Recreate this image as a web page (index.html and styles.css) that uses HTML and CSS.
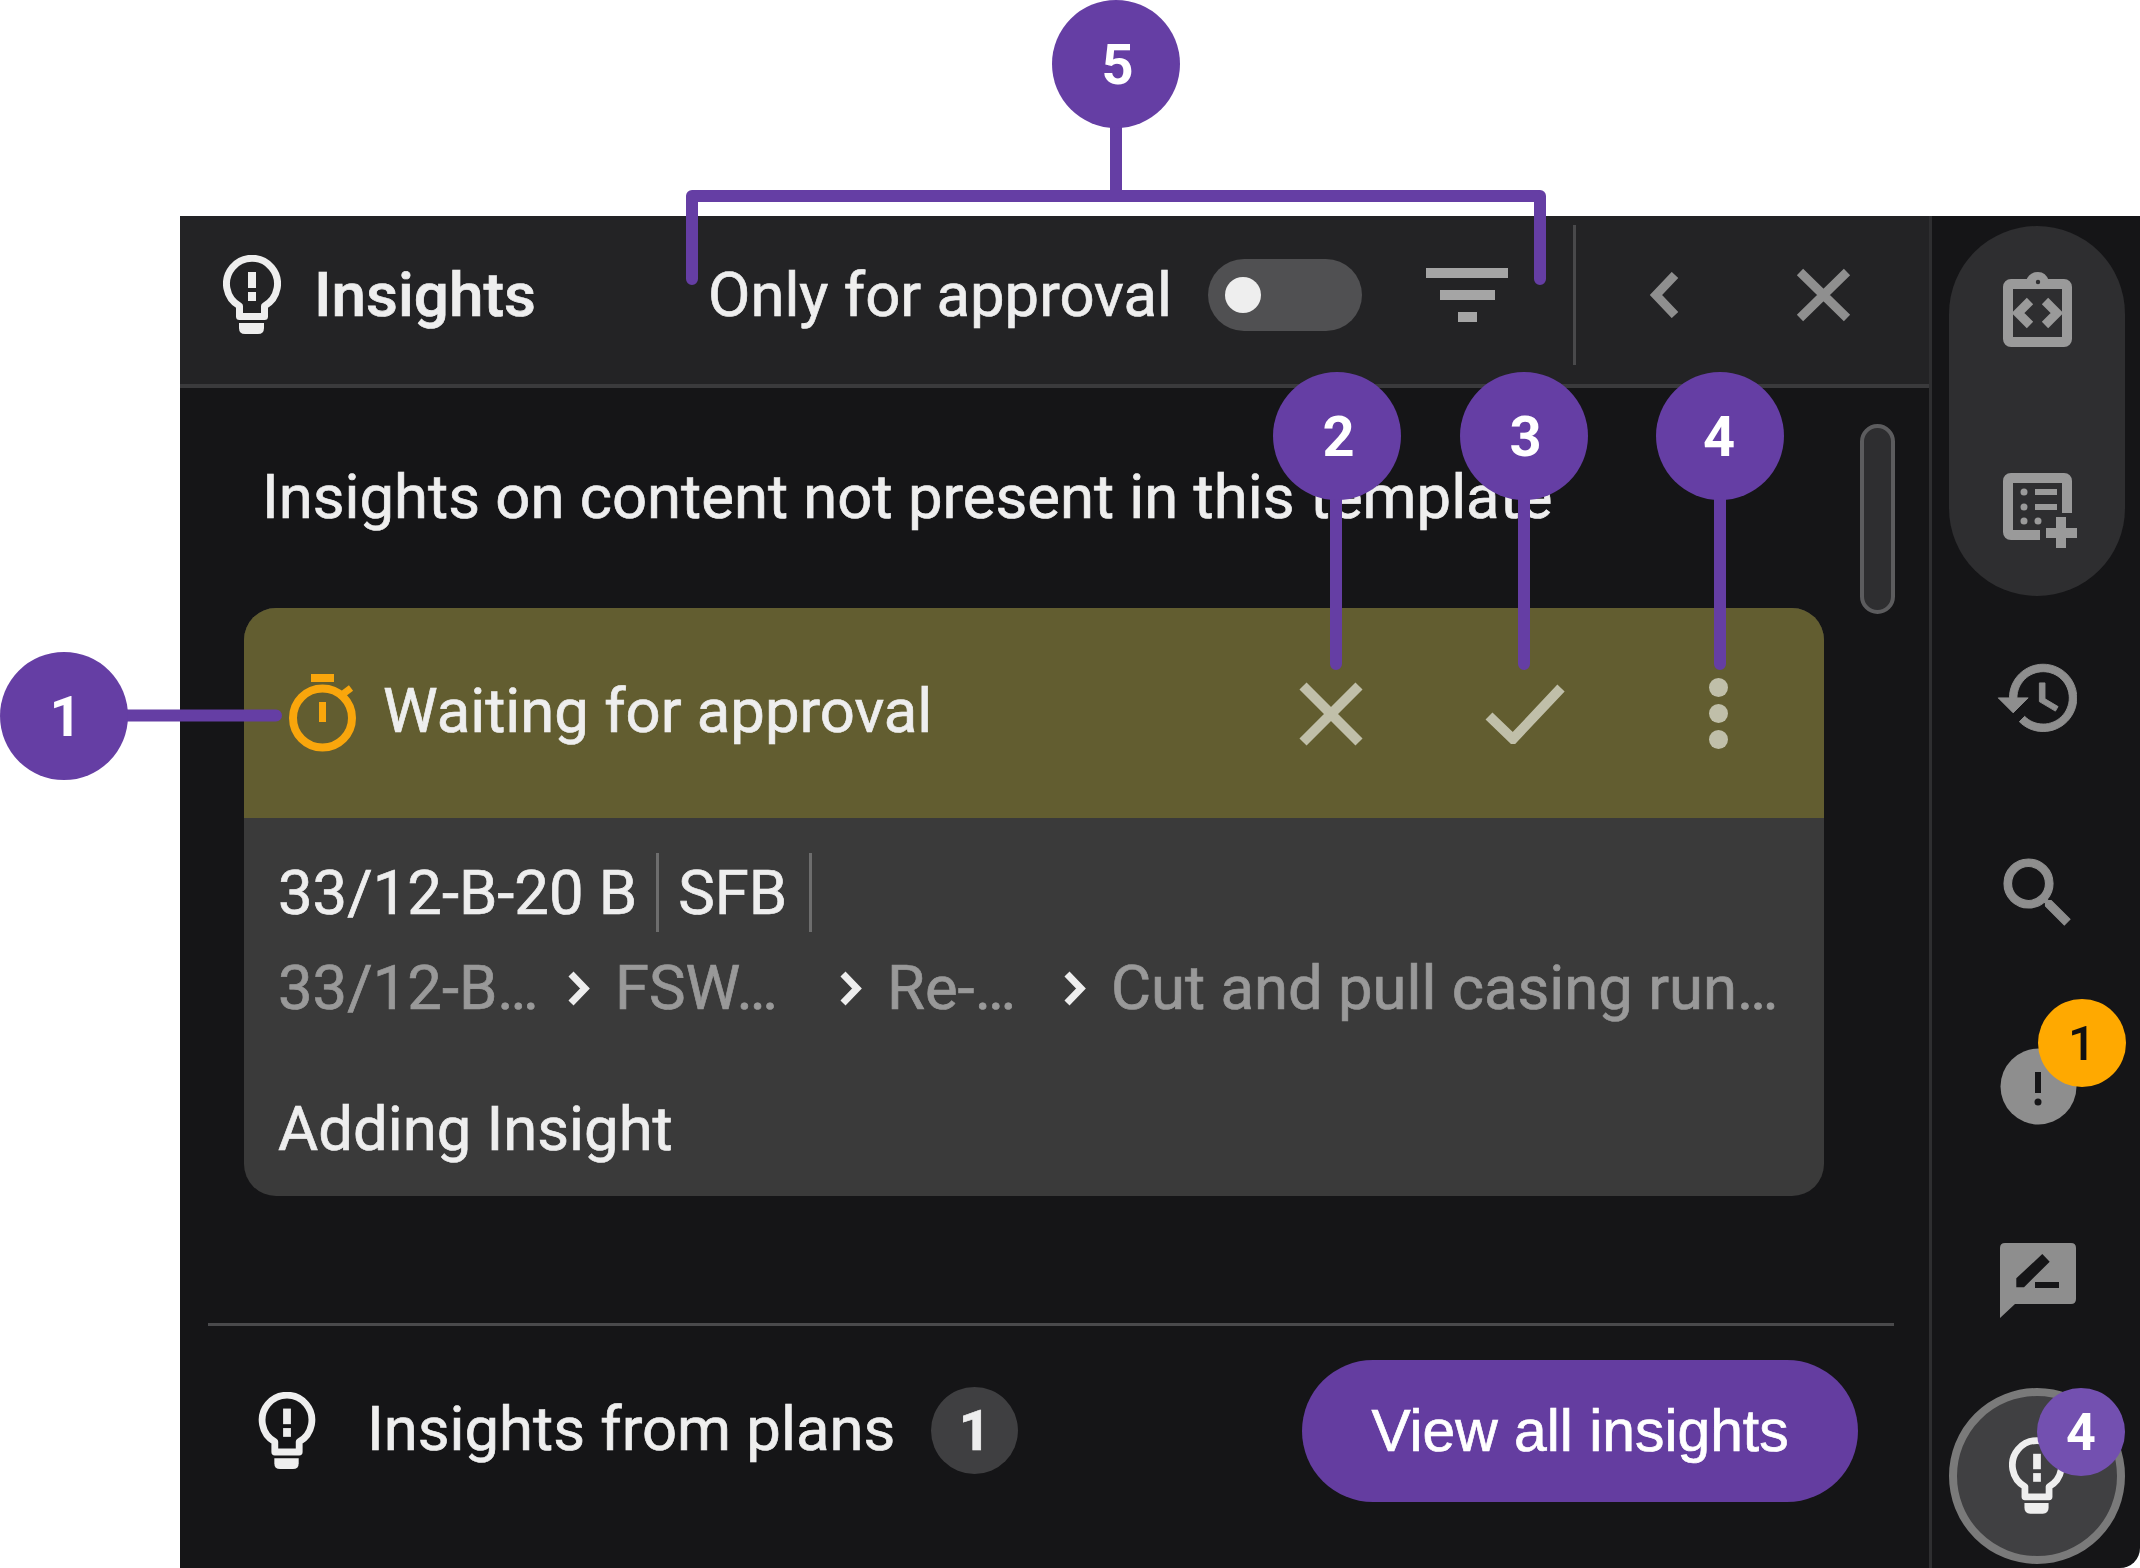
FILE: index.html
```html
<!DOCTYPE html>
<html lang="en">
<head>
<meta charset="utf-8">
<title>Insights</title>
<link rel="stylesheet" href="styles.css">
</head>
<body>
<svg class="defs" width="0" height="0" aria-hidden="true">
  <symbol id="bulb" viewBox="0 0 58 80">
    <path d="M16.5 61.5V51A25.5 25.5 0 1 1 41.5 51V61.5Z" fill="none" stroke="currentColor" stroke-width="7" stroke-linejoin="round"/>
    <rect x="25" y="17" width="8" height="16" fill="currentColor"/>
    <rect x="25" y="37" width="8" height="9" fill="currentColor"/>
    <path d="M16 68H41V73Q41 79 35 79H22Q16 79 16 73Z" fill="currentColor"/>
  </symbol>
</svg>
<div class="stage">
  <div class="panel">
    <div class="main">
      <header class="topbar">
        <div class="brand">
          <svg class="bulb-lg"><use href="#bulb"/></svg>
          <span class="brand-name">Insights</span>
        </div>
        <span class="filter-label">Only for approval</span>
        <span class="toggle"><span class="knob"></span></span>
        <svg class="filter-icon" viewBox="0 0 82 54"><path d="M0 0H82V10H0ZM14 22H69V32H14ZM32 44H51V54H32Z"/></svg>
        <span class="vline"></span>
        <svg class="chev-back" viewBox="0 0 31 46"><path d="M26 3 7 23 26 43"/></svg>
        <svg class="close-top" viewBox="0 0 55 54"><path d="M4 4 51 50M51 4 4 50"/></svg>
      </header>
      <section class="content">
        <p class="intro">Insights on content not present in this template</p>
        <span class="scrollbar"></span>
        <article class="card">
          <div class="card-head">
            <svg class="watch" viewBox="0 0 67 78"><circle cx="33.5" cy="44" r="29.500" fill="none" stroke="#f9a60c" stroke-width="8"/><path d="M22 0H45V8H22ZM30 28H37V48H30Z" fill="#f9a60c"/><path d="M54 20 62 14" stroke="#f9a60c" stroke-width="7"/></svg>
            <span class="status">Waiting for approval</span>
            <div class="actions">
              <svg class="act-x" viewBox="0 0 64 64"><path d="M4 4 60 60M60 4 4 60"/></svg>
              <svg class="act-check" viewBox="0 0 80 60"><path d="M4 32 28 55 76 4"/></svg>
              <svg class="act-dots" viewBox="0 0 19 72"><circle cx="9.5" cy="9.5" r="9.5"/><circle cx="9.5" cy="35.5" r="9.5"/><circle cx="9.5" cy="61.5" r="9.5"/></svg>
            </div>
          </div>
          <div class="card-body">
            <div class="ids"><span>33/12-B-20 B</span><i class="sep"></i><span>SFB</span><i class="sep sep-end"></i></div>
            <div class="crumbs">
              <span class="seg seg1">33/12-B…</span>
              <svg class="crumb-chev" viewBox="0 0 23 37"><path d="M4 4 18 18.500 4 33"/></svg>
              <span class="seg seg2">FSW…</span>
              <svg class="crumb-chev" viewBox="0 0 23 37"><path d="M4 4 18 18.500 4 33"/></svg>
              <span class="seg seg3">Re-…</span>
              <svg class="crumb-chev" viewBox="0 0 23 37"><path d="M4 4 18 18.500 4 33"/></svg>
              <span class="seg">Cut and pull casing run…</span>
            </div>
            <div class="desc">Adding Insight</div>
          </div>
        </article>
      </section>
      <footer class="foot">
        <svg class="bulb-md"><use href="#bulb"/></svg>
        <span class="foot-label">Insights from plans</span>
        <span class="foot-count">1</span>
        <button class="view-all">View all insights</button>
      </footer>
    </div>
    <nav class="rail">
      <div class="pill">
        <svg class="nav" viewBox="0 0 80 80"><rect x="11" y="14" width="59" height="58" rx="3" fill="none" stroke="#9a9a9a" stroke-width="10"/><path d="M29 11Q32 2 41 2Q49 2 52 11Z" fill="#9a9a9a"/><circle cx="41" cy="12" r="2.200" fill="#2e2e30"/><path d="M33 31 21 43 33 55M48 31 60 43 48 55" fill="none" stroke="#9a9a9a" stroke-width="9"/></svg>
        <svg class="nav" viewBox="0 0 80 80"><path d="M70 43V11Q70 8 67 8H14Q11 8 11 11V62Q11 65 14 65H43" fill="none" stroke="#9a9a9a" stroke-width="10"/><path d="M38 19H60V25H38ZM38 34H60V40H38ZM59 47H69V58H80V68H69V78H59V68H49V58H59Z" fill="#9a9a9a"/><circle cx="27" cy="22" r="3.500" fill="#9a9a9a"/><circle cx="27" cy="37" r="3.500" fill="#9a9a9a"/><circle cx="27" cy="51" r="3.500" fill="#9a9a9a"/><circle cx="41" cy="51" r="3.500" fill="#9a9a9a"/></svg>
      </div>
      <svg class="nav nav-history" viewBox="0 0 80 80"><path transform="translate(-2.500 -7) scale(3.740)" fill="#8e8e8e" stroke="#8e8e8e" stroke-width=".25" d="M13 3c-4.970 0-9 4.030-9 9H1l3.890 3.890.07.140L9 12H6c0-3.870 3.130-7 7-7s7 3.130 7 7-3.130 7-7 7c-1.930 0-3.680-.79-4.940-2.060l-1.420 1.420C8.270 19.990 10.510 21 13 21c4.970 0 9-4.030 9-9s-4.030-9-9-9zm-1 5v5l4.280 2.540.72-1.210-3.500-2.080V8H12z"/></svg>
      <svg class="nav nav-search" viewBox="0 0 80 80"><path transform="translate(-4.300 -4.300) scale(3.770)" fill="#8e8e8e" stroke="#8e8e8e" stroke-width=".3" d="M15.500 14h-.79l-.28-.27C15.410 12.590 16 11.110 16 9.500 16 5.910 13.090 3 9.500 3S3 5.910 3 9.500 5.910 16 9.500 16c1.610 0 3.090-.59 4.230-1.570l.27.28v.79l5 4.990L20.490 19l-4.990-5zm-6 0C7.010 14 5 11.990 5 9.500S7.010 5 9.500 5 14 7.010 14 9.500 11.990 14 9.500 14z"/></svg>
      <div class="nav-alert">
        <svg class="nav" viewBox="0 0 80 80"><circle cx="41.500" cy="39.500" r="38" fill="#8e8e8e"/><path d="M38 25H44V46H38Z" fill="#151517"/><circle cx="41" cy="55" r="3.500" fill="#151517"/></svg>
        <span class="count count-alert">1</span>
      </div>
      <svg class="nav nav-comment" viewBox="0 0 80 80"><path d="M8 2H74Q79 2 79 7V58Q79 63 74 63H18L3 77V7Q3 2 8 2Z" fill="#8e8e8e"/><path d="M19.300 37.300 45.300 13 52.700 20.700 27 46.300H19.300ZM38 41H62V47H38Z" fill="#151517"/></svg>
      <div class="nav-active">
        <svg class="bulb-sm"><use href="#bulb"/></svg>
        <span class="count count-insights">4</span>
      </div>
    </nav>
  </div>

  <svg class="leaders" viewBox="0 0 2140 1568" aria-hidden="true">
    <path d="M1116 120V196M692 279V196H1540V279M1336 490V664M1524 490V664M1720 490V664M120 715.500H276"/>
  </svg>
  <span class="callout c1">1</span>
  <span class="callout c2">2</span>
  <span class="callout c3">3</span>
  <span class="callout c4">4</span>
  <span class="callout c5">5</span>
</div>
</body>
</html>
```
FILE: styles.css
```css
* { box-sizing: border-box; }
html, body { margin: 0; padding: 0; background: #fff; }
body { font-family: Roboto, "Liberation Sans", sans-serif; color: #eee; overflow: hidden; }
.defs { position: absolute; }
svg { display: block; flex: none; }

.stage { position: relative; width: 2140px; height: 1568px; padding: 216px 0 0 180px; background: #fff; overflow: hidden; }
.panel { display: flex; width: 1960px; height: 1352px; background: #151517; border-bottom-right-radius: 20px; overflow: hidden; }
.main { display: flex; flex-direction: column; width: 1749px; flex: none; -webkit-text-stroke: 0.7px currentColor; }

.topbar { display: flex; align-items: center; height: 172px; padding: 0 0 10px 43px; background: #232325; border-bottom: 4px solid #3a3a3c; }
.brand { display: flex; align-items: center; gap: 33px; width: 485px; flex: none; }
.bulb-lg { width: 58px; height: 80px; color: #eee; }
.brand-name { font-size: 62px; font-weight: 500; line-height: 72px; }
.filter-label { width: 463px; flex: none; font-size: 61.6px; line-height: 72px; white-space: nowrap; }
.toggle { display: flex; align-items: center; width: 154px; height: 72px; margin-left: 37px; padding-left: 17px; border-radius: 36px; background: #505052; flex: none; }
.knob { width: 36px; height: 36px; border-radius: 50%; background: #eee; }
.filter-icon { width: 82px; height: 54px; margin-left: 64px; fill: #a5a5a5; }
.vline { width: 3px; height: 140px; margin-left: 65px; background: #49494b; flex: none; }
.chev-back { width: 31px; height: 46px; margin-left: 73px; fill: none; stroke: #8f8f8f; stroke-width: 9; }
.close-top { width: 55px; height: 54px; margin-left: 116px; fill: none; stroke: #8f8f8f; stroke-width: 9; }

.content { position: relative; height: 938px; padding-top: 73px; border-bottom: 3px solid #4a4a4c; margin-left: 28px; width: 1686px; flex: none; }
.intro { margin: 0 0 75px 54px; font-size: 61.6px; line-height: 72px; white-space: nowrap; }
.scrollbar { position: absolute; left: 1652px; top: 36px; width: 35px; height: 190px; border: 4px solid #5c5c5e; border-radius: 18px; background: #2e2e30; }
.card { width: 1580px; margin-left: 36px; border-radius: 32px; overflow: hidden; background: #3a3a3a; }
.card-head { display: flex; align-items: center; height: 210px; padding: 0 96px 0 45px; background: #625d30; }
.watch { width: 67px; height: 78px; }
.status { margin: 0 0 4px 27px; font-size: 61.6px; line-height: 72px; white-space: nowrap; }
.actions { display: flex; align-items: center; margin: 2px 0 0 auto; }
.act-x { width: 64px; height: 64px; fill: none; stroke: #c0bfa9; stroke-width: 10; }
.act-check { width: 80px; height: 60px; margin-left: 122px; fill: none; stroke: #c0bfa9; stroke-width: 10; }
.act-dots { width: 19px; height: 72px; margin-left: 144px; fill: #c0bfa9; }

.card-body { padding: 35px 0 31px 34px; }
.ids { display: flex; align-items: center; height: 79px; gap: 19px; font-size: 61.6px; line-height: 72px; }
.sep { width: 3px; height: 79px; background: #6d6d6d; }
.sep-end { margin-left: 3px; }
.crumbs { display: flex; align-items: center; height: 72px; margin-top: 20px; font-size: 61.6px; line-height: 72px; color: #999; white-space: nowrap; }
.seg { flex: none; }
.seg1 { width: 289px; }
.seg2 { width: 224px; }
.seg3 { width: 176px; }
.crumb-chev { width: 23px; height: 37px; margin-right: 25px; fill: none; stroke: #eee; stroke-width: 7; }
.desc { margin-top: 69px; font-size: 61.6px; line-height: 72px; }

.foot { display: flex; align-items: center; height: 141px; width: 1686px; margin: 34px 0 0 28px; padding: 0 36px 0 50px; flex: none; }
.bulb-md { width: 58px; height: 78px; color: #eee; }
.foot-label { margin: 0 0 3px 51px; font-size: 61.6px; line-height: 72px; white-space: nowrap; }
.foot-count { display: flex; align-items: center; justify-content: center; width: 87px; height: 87px; margin-left: 36px; border-radius: 50%; background: #3f3f41; font-size: 56px; font-weight: 700; }
.view-all { height: 142px; width: 556px; margin-left: auto; border: 0; border-radius: 71px; background: #643da0; color: #fff; font-family: "Liberation Sans", Arial, sans-serif; font-size: 58.8px; }

.rail { display: flex; flex-direction: column; align-items: center; width: 211px; padding-left: 2px; flex: none; border-left: 3px solid #2e2e30; }
.pill { display: flex; flex-direction: column; align-items: center; gap: 120px; width: 176px; height: 370px; margin-top: 10px; padding-top: 44px; border-radius: 88px; background: #2e2e30; flex: none; }
.nav { width: 80px; height: 80px; }
.nav-history { margin-top: 64px; }
.nav-search { margin-top: 112px; }
.nav-alert { position: relative; width: 80px; height: 80px; margin-top: 115px; flex: none; }
.nav-comment { margin-top: 114px; }
.nav-active { position: relative; display: flex; align-items: center; justify-content: center; width: 176px; height: 176px; margin-top: 67px; border: 8px solid #7a7a7a; border-radius: 50%; background: #404042; flex: none; }
.bulb-sm { width: 56px; height: 78px; color: #eee; }
.count { position: absolute; display: flex; align-items: center; justify-content: center; width: 88px; height: 88px; border-radius: 50%; font-size: 49px; font-weight: 500; }
.count-alert { left: 41px; top: -48px; background: #ffa900; color: #111; }
.count-insights { left: 80px; top: -8px; background: #7350b0; color: #fff; font-size: 52px; font-weight: 700; }

.leaders { position: absolute; inset: 0; width: 2140px; height: 1568px; fill: none; stroke: #653ea4; stroke-width: 12; stroke-linecap: round; stroke-linejoin: round; }
.callout { position: absolute; display: flex; align-items: center; justify-content: center; width: 128px; height: 128px; padding: 2px 0 0 3px; border-radius: 50%; background: #653ea4; color: #fff; font-size: 56px; font-weight: 700; }
.c1 { left: 0; top: 652px; }
.c2 { left: 1273px; top: 372px; }
.c3 { left: 1460px; top: 372px; }
.c4 { left: 1656px; top: 372px; padding-left: 0; padding-right: 2px; }
.c5 { left: 1052px; top: 0; }
```
